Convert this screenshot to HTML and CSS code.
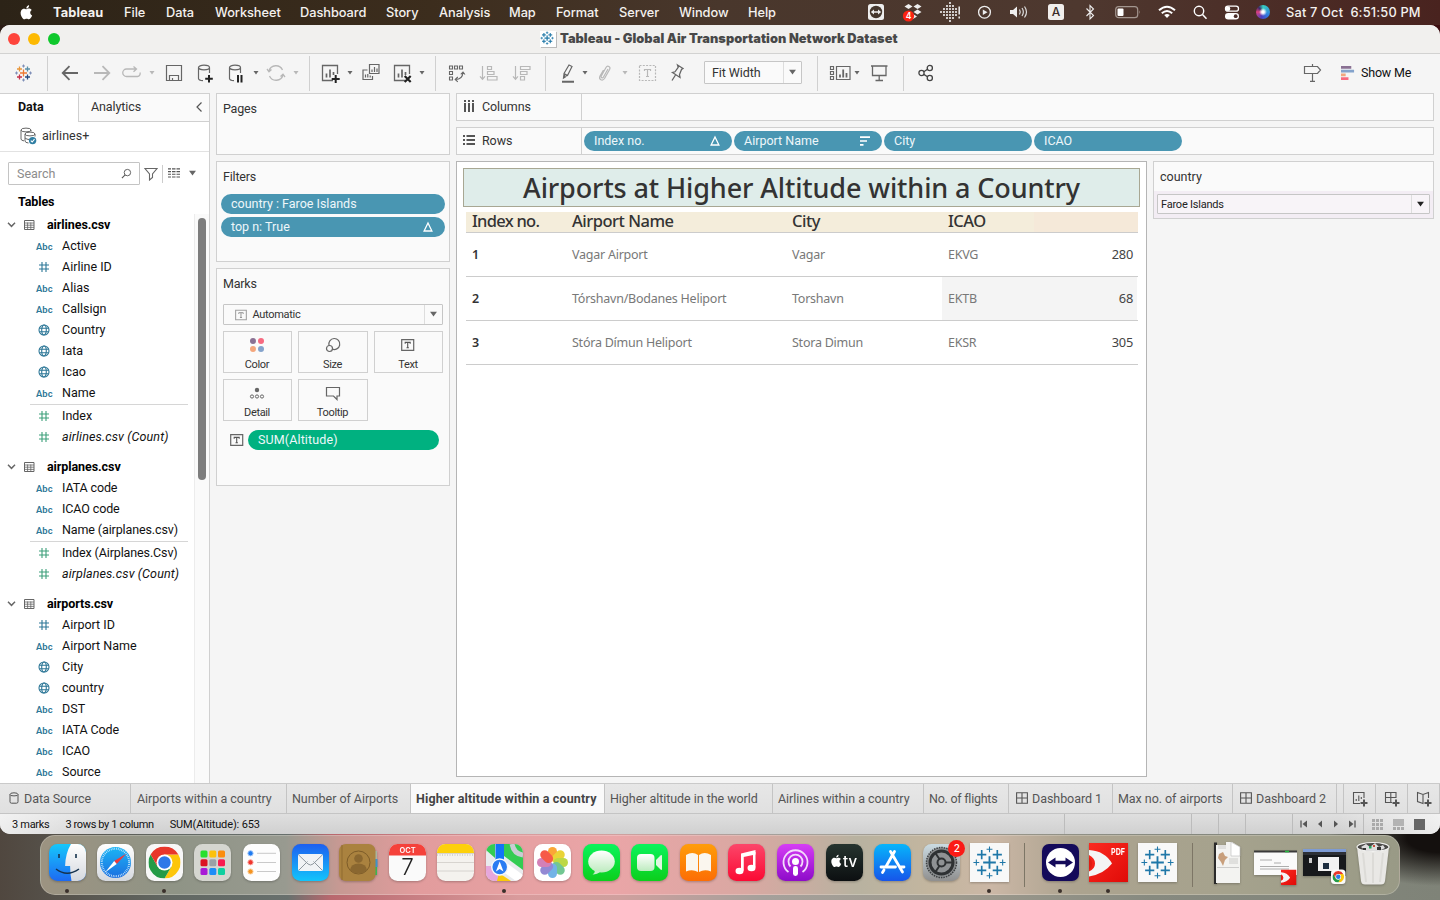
FILE: index.html
```html
<!DOCTYPE html>
<html lang="en">
<head>
<meta charset="utf-8">
<title>Tableau - Global Air Transportation Network Dataset</title>
<link rel="stylesheet" href="styles.css">
</head>
<body>
<svg class="defs" width="0" height="0" aria-hidden="true">
  <symbol id="caret" viewBox="0 0 8 8"><path d="M1.5 2h5L4 5.4z" fill="currentColor"/></symbol>
  <symbol id="hash" viewBox="0 0 12 12"><path d="M4 1v10M8 1v10M1 4h10M1 8h10" stroke="currentColor" stroke-width="1.1" fill="none"/></symbol>
  <symbol id="globe" viewBox="0 0 12 12"><g stroke="currentColor" stroke-width="1.1" fill="none"><circle cx="6" cy="6" r="5"/><ellipse cx="6" cy="6" rx="2.3" ry="5"/><path d="M1.4 4.2h9.2M1.4 7.8h9.2"/></g></symbol>
  <symbol id="table" viewBox="0 0 12 12"><g stroke="#666" fill="none"><path d="M1.5 1.5h9.500v9h-9.500z"/><path d="M1 4h10M1 6.200h10M1 8.400h10M4.600 3.500v7M7.800 3.500v7" stroke-width=".8"/></g></symbol>
  <symbol id="chev" viewBox="0 0 10 10"><path d="M1.8 3.500L5 6.700l3.200-3.200" stroke="#666" stroke-width="1.300" fill="none"/></symbol>
  <symbol id="delta" viewBox="0 0 12 12"><path d="M6 2l3.900 8H2.100z" stroke="#fff" stroke-width="1.300" fill="none"/></symbol>
  <symbol id="tbox" viewBox="0 0 14 12"><path d="M.7.7h12v10.600h-12z" stroke="#666" stroke-width="1.200" fill="none"/><path d="M4.200 4.800V3.400h5v1.400M6.700 3.400v5.400M5.500 8.800h2.400" stroke="#555" stroke-width="1.100" fill="none"/></symbol>
  <symbol id="dash" viewBox="0 0 12 12"><path d="M.6 .8h10.800v10.400H.6zM6 .8v10.400M.6 6h10.800" stroke="#555" stroke-width="1.100" fill="none"/></symbol>
  <symbol id="sheet" viewBox="0 0 20 20"><path d="M17.500 11V2.500h-15v15H13" stroke="currentColor" stroke-width="1.300" fill="none"/><path d="M6.500 14.500v-4M10 14.500v-8M13.500 12v-3" stroke="currentColor" stroke-width="1.700"/></symbol>
  <symbol id="db" viewBox="0 0 20 20"><g stroke="currentColor" stroke-width="1.200" fill="none"><ellipse cx="9" cy="4.500" rx="5.500" ry="2.300"/><path d="M3.500 4.500v11c0 1.200 2 2 4.500 2.200M14.500 4.500V10"/></g></symbol>
  <symbol id="marks" viewBox="0 0 40 40"><g stroke="#1f77a8" fill="none"><path d="M20 13.500v13M13.500 20h13" stroke-width="1.900"/><path d="M12 7.300v9.400M7.300 12h9.400M28 7.300v9.400M23.300 12h9.400M12 23.300v9.400M7.300 28h9.400M28 23.300v9.400M23.300 28h9.400" stroke-width="1.700"/><path d="M20 3.500v6M17 6.500h6M20 30.500v6M17 33.500h6M3.500 20h6M6.500 17v6M30.500 20h6M33.500 17v6" stroke-width="1.100"/></g></symbol>
  <symbol id="chrome" viewBox="0 0 32 32"><path d="M16 8h13.860A16 16 0 0 1 16 32l6.930-12z" fill="#fdc60a"/><path d="M2.140 8A16 16 0 0 0 16 32l6.930-12H9.070z" fill="#249b46"/><path d="M2.140 8A16 16 0 0 1 29.860 8H16l-6.930 12z" fill="#e8372b"/><circle cx="16" cy="16" r="8" fill="#fff"/><circle cx="16" cy="16" r="6.200" fill="#2d79e8"/></symbol>
  <symbol id="redpdf" viewBox="0 0 39 39"><path d="M0 0h39v39H0z" fill="url(#gPdf)"/><path d="M0 7q16 1 23 13.500Q15 31 0 33.500v-5q6-2.500 6-8T0 12z" fill="#f4f4f4"/><path d="M0 14.500q3 2 3 6t-3 6z" fill="#e01b12"/></symbol>
  <linearGradient id="gFinder" x2="0" y2="1"><stop offset="0" stop-color="#16c7fb"/><stop offset="1" stop-color="#1d6af2"/></linearGradient>
  <linearGradient id="gLight" x2="0" y2="1"><stop offset="0" stop-color="#fff"/><stop offset="1" stop-color="#d5d8de"/></linearGradient>
  <linearGradient id="gSafari" x2="0" y2="1"><stop offset="0" stop-color="#1cb5f5"/><stop offset="1" stop-color="#1c6fe0"/></linearGradient>
  <linearGradient id="gMail" x2="0" y2="1"><stop offset="0" stop-color="#1d5ff0"/><stop offset="1" stop-color="#12c5fb"/></linearGradient>
  <linearGradient id="gGreen" x2="0" y2="1"><stop offset="0" stop-color="#0bf45c"/><stop offset="1" stop-color="#0cce1c"/></linearGradient>
  <linearGradient id="gBubble" x2="0" y2="1"><stop offset="0" stop-color="#fff"/><stop offset="1" stop-color="#bdebbf"/></linearGradient>
  <linearGradient id="gBooks" x2="0" y2="1"><stop offset="0" stop-color="#ff9d0a"/><stop offset="1" stop-color="#fc6d05"/></linearGradient>
  <linearGradient id="gMusic" x2="0" y2="1"><stop offset="0" stop-color="#fc466a"/><stop offset="1" stop-color="#fb0a33"/></linearGradient>
  <linearGradient id="gPod" x2="0" y2="1"><stop offset="0" stop-color="#d63df5"/><stop offset="1" stop-color="#8d0bc9"/></linearGradient>
  <linearGradient id="gTv" x2="0" y2="1"><stop offset="0" stop-color="#26342f"/><stop offset="1" stop-color="#0c0f11"/></linearGradient>
  <linearGradient id="gStore" x2="0" y2="1"><stop offset="0" stop-color="#07b5fb"/><stop offset="1" stop-color="#1655ea"/></linearGradient>
  <linearGradient id="gGear" x2="0" y2="1"><stop offset="0" stop-color="#cbdbe2"/><stop offset="1" stop-color="#8f8f8f"/></linearGradient>
  <linearGradient id="gPdf" x2="1" y2="1"><stop offset="0" stop-color="#fb2a20"/><stop offset="1" stop-color="#e00b08"/></linearGradient>
</svg>

<header class="menubar">
  <svg class="i20 apple" viewBox="0 0 20 20"><path d="M14.200 10.600c0-1.700 1.400-2.500 1.500-2.600-.8-1.200-2.100-1.400-2.600-1.400-1.100-.1-2.100.7-2.700.7-.6 0-1.400-.6-2.300-.6-1.200 0-2.300.7-2.900 1.700-1.300 2.200-.3 5.400.9 7.100.6.9 1.300 1.800 2.200 1.800.9 0 1.200-.6 2.300-.6s1.400.6 2.300.6c1 0 1.600-.9 2.200-1.700.7-1 1-1.900 1-2-.1 0-1.900-.7-1.900-3zM12.400 5.400c.5-.6.8-1.400.7-2.200-.7 0-1.500.5-2 1-.5.6-.9 1.400-.8 2.200.8.100 1.600-.4 2.100-1z" fill="#fff"/></svg>
  <b>Tableau</b><span>File</span><span>Data</span><span>Worksheet</span><span>Dashboard</span><span>Story</span><span>Analysis</span><span>Map</span><span>Format</span><span>Server</span><span>Window</span><span>Help</span>
  <svg class="i20" viewBox="0 0 20 20"><rect x="2" y="2" width="16" height="16" rx="2.500" fill="#eee"/><circle cx="10" cy="10" r="6.200" fill="#45372d"/><path d="M4.800 10l3.200-2.400v1.600h4V7.600l3.200 2.400-3.200 2.400v-1.600H8v1.600z" fill="#eee"/></svg>
  <svg class="i20" viewBox="0 0 20 20"><path d="M5.500 2l4 2.500-4 2.500-4-2.500zM14.500 2l4 2.500-4 2.500-4-2.500zM14.500 7.500l4 2.500-4 2.500-4-2.500zM10 12l4 2.500-4 2.500z" fill="#eee"/><circle cx="5.500" cy="14" r="5.600" fill="#fb2312"/><text x="5.500" y="17" font-size="8.500" font-weight="600" text-anchor="middle" fill="#fff">4</text></svg>
  <svg class="i20" viewBox="0 0 20 20"><g stroke="#eee" stroke-width="2.200" stroke-linecap="round" stroke-dasharray="0 3"><path d="M10 1v19M7 4v13M13 4v13M4 7v7M16 7v7M1 10h.1"/></g><path d="M19.200 4.500v8M19.200 14.500v2" stroke="#eee" stroke-width="1.500"/></svg>
  <svg class="i20" viewBox="0 0 20 20"><circle cx="9.500" cy="10.200" r="5.900" stroke="#eee" stroke-width="1.300" fill="none"/><path d="M7.800 7.400v5.600l4.700-2.800z" fill="#eee"/></svg>
  <svg class="i20" viewBox="0 0 20 20"><path d="M1 8h3l4-3.500v11L4 12H1z" fill="#eee"/><path d="M10.500 7.500q1.500 2.500 0 5M13 6q2.700 4 0 8M15.500 4.500q4 5.500 0 11" stroke="#ddd" stroke-width="1.200" fill="none"/></svg>
  <svg class="i20" viewBox="0 0 20 20"><rect x="2" y="2" width="16" height="16" rx="2.500" fill="#f1eeec"/><text x="10" y="14.200" font-size="12" text-anchor="middle" fill="#3b2c27">A</text></svg>
  <svg class="i20" viewBox="0 0 20 20"><path d="M6.500 6.500l7 7L10 17V3.500L13.500 7l-7 7" stroke="#eee" stroke-width="1.100" fill="none"/></svg>
  <svg class="i26" viewBox="0 0 26 20"><rect x=".7" y="4.700" width="22" height="11" rx="3" stroke="#a3968f" stroke-width="1.200" fill="none"/><rect x="2.500" y="6.500" width="6" height="7.400" rx="1" fill="#fff"/><path d="M24.300 8.300q1.400 1.800 0 3.600z" fill="#a3968f"/></svg>
  <svg class="i20" viewBox="0 0 20 20"><g stroke="#fff" fill="none" stroke-width="2"><path d="M2 8.200q8-7 16 0M4.800 11.200q5.200-4.500 10.400 0"/></g><path d="M10 16l-2.800-3q2.800-2.200 5.600 0z" fill="#fff"/></svg>
  <svg class="i20" viewBox="0 0 20 20"><circle cx="9" cy="9" r="4.700" stroke="#fff" stroke-width="1.400" fill="none"/><path d="M12.500 12.500l4 4.200" stroke="#fff" stroke-width="1.600"/></svg>
  <svg class="i20" viewBox="0 0 20 20"><rect x="3.500" y="4.200" width="13" height="5" rx="2.500" stroke="#fff" stroke-width="1.300" fill="none"/><circle cx="6" cy="6.700" r="2.300" fill="#fff"/><rect x="3" y="11" width="14" height="6.500" rx="3.200" fill="#fff"/><circle cx="13.700" cy="14.200" r="1.900" fill="#4a2c28"/></svg>
  <i class="siri"></i>
  <span class="clock">Sat 7 Oct&nbsp; 6:51:50 PM</span>
</header>

<main class="window">
  <div class="titlebar">
    <div class="lights"><i class="red"></i><i class="amber"></i><i class="green"></i></div>
    <svg class="tlogo" viewBox="2 2 36 36"><use href="#marks"/><use href="#marks"/></svg>
    <b>Tableau - Global Air Transportation Network Dataset</b>
  </div>

  <div class="toolbar">
    <svg class="i20" viewBox="0 0 20 20"><g fill="none" stroke-width="1.300"><path d="M9.500 6.500v7M6 10h7" stroke="#ee7a33"/><path d="M5.500 3.500v5M3 6h5" stroke="#e8963a"/><path d="M13.500 3.500v5M11 6h5" stroke="#5b90a8"/><path d="M5.500 11.500v5M3 14h5" stroke="#c4314b"/><path d="M13.500 11.500v5M11 14h5" stroke="#274b80"/><path d="M9.500 1.500v3M8 3h3M9.500 15.500v3M8 17h3M1 10h3M2.500 8.500v3M15 10h3M16.500 8.500v3" stroke="#7f8fb8" stroke-width="1"/></g></svg>
    <i class="sep"></i>
    <svg class="i20 dk" viewBox="0 0 20 20"><path d="M18 10H3M9.500 3.200L2.700 10l6.800 6.800" stroke="currentColor" stroke-width="1.800" fill="none"/></svg>
    <svg class="i20 lt" viewBox="0 0 20 20"><path d="M2 10h15M10.500 3.200l6.800 6.800-6.800 6.800" stroke="currentColor" stroke-width="1.800" fill="none"/></svg>
    <svg class="i20 lt" viewBox="0 0 20 20"><path d="M14 6H4.500a3.200 3.200 0 0 0 0 7.500h11a3 3 0 0 0 2.500-4M11.500 3.500L14.500 6l-3 2.800" stroke="currentColor" stroke-width="1.300" fill="none"/></svg>
    <svg class="c8 lt"><use href="#caret"/></svg>
    <svg class="i20 dk" viewBox="0 0 20 20"><path d="M2.500 2.500h15v15h-15zM5.500 17.500v-5h9v5M8.500 17.500V15" stroke="currentColor" stroke-width="1.200" fill="none"/></svg>
    <svg class="i20 dk" viewBox="0 -1 20 20"><use href="#db" width="20" height="20" y="-1"/><path d="M14 11v7.600M10.200 14.800h7.600" stroke="#222" stroke-width="2"/></svg>
    <svg class="i20 dk" viewBox="0 -1 20 20"><use href="#db" width="20" height="20" y="-1"/><path d="M12 11v7.500M15.500 11v7.500" stroke="#222" stroke-width="2"/></svg>
    <svg class="c8 dk"><use href="#caret"/></svg>
    <svg class="i20 lt" viewBox="0 0 20 20"><path d="M3 8a7.200 7.200 0 0 1 13.500-1M17 12A7.200 7.200 0 0 1 3.500 13M1 6l2 2.800L5.500 6.500M19 14l-2-2.800-2.500 2.300" stroke="currentColor" stroke-width="1.300" fill="none"/></svg>
    <svg class="c8 lt"><use href="#caret"/></svg>
    <i class="sep"></i>
    <svg class="i20 dk" viewBox="1 0 20 20"><use href="#sheet" width="20" height="20"/><path d="M15.700 12v8M11.700 16h8" stroke="#222" stroke-width="2"/></svg>
    <svg class="c8 dk"><use href="#caret"/></svg>
    <svg class="i20 dk" viewBox="0 0 20 20"><path d="M8.500 1.500h9.500v9H8.500zM6.500 7H2v9.500h9.500V13M11 9V6.500M13.500 9V4M16 9V5.500M4.500 14.500v-3M6.800 14.500V11M9.200 14.500v-2" stroke="currentColor" stroke-width="1.200" fill="none"/></svg>
    <svg class="i20 dk" viewBox="1 0 20 20"><use href="#sheet" width="20" height="20"/><path d="M12.700 13l6 6M18.700 13l-6 6" stroke="#222" stroke-width="2.200"/></svg>
    <svg class="c8 dk"><use href="#caret"/></svg>
    <i class="sep"></i>
    <svg class="i20 dk" viewBox="0 0 20 20"><g stroke="currentColor" stroke-width="1.100" fill="none"><path d="M2.500 3h3v3h-3zM7.500 3h3v3h-3zM12.500 3h3v3h-3zM2.500 8.500h3v3h-3zM2.500 14h3v3h-3z"/><path d="M8.500 16.500q7 0 7.500-7M10.800 14l-2.600 2.500 2.600 2.300M13.800 11.300L16 9l2 2.500"/></g></svg>
    <svg class="i20 lt" viewBox="1 0 20 20"><path d="M3.500 3v13M1 13.300l2.500 3 2.500-3M8.500 3.500h4v3h-4zM8.500 8.500h6.500v3H8.500zM8.500 13.500h9.500v3.500H8.500z" stroke="currentColor" stroke-width="1.200" fill="none"/></svg>
    <svg class="i20 lt" viewBox="0 0 20 20"><path d="M3.500 3v13M1 13.300l2.500 3 2.500-3M8.500 3.500h9.500v3H8.500zM8.500 8.500h6.500v3H8.500zM8.500 13.500h4v3.500h-4z" stroke="currentColor" stroke-width="1.200" fill="none"/></svg>
    <i class="sep"></i>
    <svg class="i20 dk" viewBox="0 0 20 20"><path d="M6 10.500l5-8.500 3 1.500-4.500 9-3 1zM6 10.500l3.500 2M6 11l-.5 4 2.500-1.500" stroke="currentColor" stroke-width="1.200" fill="none"/><path d="M4 18.700h12" stroke="currentColor" stroke-width="2"/></svg>
    <svg class="c8 dk"><use href="#caret"/></svg>
    <svg class="i20 lt" viewBox="0 0 20 20"><path d="M13 6l-4.500 8c-1 1.700-3 .5-2.200-1L11 4.500c1.500-2.500 5-.8 3.600 2L9.500 15.500C7.500 18.500 3.300 16.500 5 13l3.500-6" stroke="currentColor" stroke-width="1.200" fill="none"/></svg>
    <svg class="c8 lt"><use href="#caret"/></svg>
    <svg class="i20 lt" viewBox="0 0 20 20"><path d="M2.500 2.500h16v15h-16z" stroke="currentColor" stroke-width="1.200" stroke-dasharray="2 1.300" fill="none"/><path d="M7.500 8V6.500h6V8M10.500 6.500v7M9 13.500h3" stroke="currentColor" stroke-width="1.200" fill="none"/></svg>
    <svg class="i20 dk" viewBox="0 0 20 20"><path d="M10.500 2l5.500 3.500-1.500 1-2 5 .5 3L5.500 9.500l2.500-.7 3.200-4.500zM8.500 12L5 17.500" stroke="currentColor" stroke-width="1.300" fill="none"/></svg>
    <div class="select fit"><span>Fit Width</span><em><svg class="c10 dk"><use href="#caret"/></svg></em></div>
    <i class="sep"></i>
    <svg class="i22 dk" viewBox="0 0 22 20"><path d="M1.500 3.500h3v3h-3zM1.500 8.500h3v3h-3zM1.500 13.500h3v3h-3zM7.500 3.500H21v13H7.500z" stroke="currentColor" stroke-width="1.200" fill="none"/><path d="M11 14.500v-3M14.200 14.500v-8M17.500 14.500V10" stroke="currentColor" stroke-width="1.800"/></svg>
    <svg class="c8 dk"><use href="#caret"/></svg>
    <svg class="i20 dk" viewBox="0 0 20 20"><path d="M2 3h16.500M3.500 3.500v9h13.500v-9M10.200 12.500v5M6.500 17.500h7.500" stroke="currentColor" stroke-width="1.300" fill="none"/></svg>
    <i class="sep"></i>
    <svg class="i20 dk" viewBox="0 0 20 20"><g stroke="#444" stroke-width="1.300" fill="none"><circle cx="5.500" cy="10" r="2.600"/><circle cx="13.800" cy="5" r="2.600"/><circle cx="13.800" cy="15" r="2.600"/><path d="M7.800 8.700L11.500 6.300M7.800 11.400l3.700 2.300"/></g></svg>
    <svg class="i20 dk" viewBox="0 0 20 20"><path d="M2.500 3.500h13l3 3.500-3 3.500h-13zM10.500 1v2.500M10.500 10.500v8M8 18.300h5" stroke="currentColor" stroke-width="1.200" fill="none"/></svg>
    <div class="showme"><svg viewBox="0 0 15 16"><path d="M0 .5h11v3H0z" fill="#8a7193"/><path d="M0 4.500h14v3H0z" fill="#84a3cc"/><path d="M0 8.500h5v3H0z" fill="#f0a77f"/><path d="M0 12.500h8v3H0z" fill="#f76a80"/></svg><span>Show Me</span></div>
  </div>

  <div class="work">
    <aside class="data">
      <div class="dtabs"><b>Data</b><div><span>Analytics</span><svg viewBox="0 0 8 12"><path d="M6.500 1.500L2 6l4.500 4.500" stroke="#555" stroke-width="1.200" fill="none"/></svg></div></div>
      <div class="source"><svg viewBox="0 0 18 18"><g stroke="#666" stroke-width="1" fill="none"><ellipse cx="6" cy="3" rx="5" ry="1.900"/><path d="M1 3v9q0 1.500 3 1.900M11 3v1.500M5 7v7q0 1.700 3.500 2"/><ellipse cx="10" cy="7" rx="5" ry="1.900"/><path d="M15 7v2.500M5 11q2 1.500 4 1.500"/></g><circle cx="12.600" cy="13.600" r="3.700" fill="#2f7ea3"/><path d="M10.800 13.600l1.400 1.400 2.300-2.800" stroke="#fff" stroke-width="1.100" fill="none"/></svg><span>airlines+</span></div>
      <div class="find">
        <div class="search"><span>Search</span><svg viewBox="0 0 12 12"><circle cx="7" cy="5" r="3.500" stroke="#555" fill="none"/><path d="M4.500 7.500L1 11" stroke="#555" stroke-width="1.200"/></svg></div>
        <svg class="funnel" viewBox="0 0 14 14"><path d="M1 1.500h12L8.500 7v3.500l-3 2.500V7z" stroke="#666" stroke-width="1.100" fill="none"/></svg>
        <i></i>
        <svg class="listicon" viewBox="0 0 12 10"><g stroke="#555" stroke-width="1.100"><path d="M0 .9h3M4 .9h3.500M8.500 .9H12M0 3.600h3M4 3.600h3.500M8.500 3.600H12M0 6.300h3M4 6.300h3.500M8.500 6.300H12M0 9h3M4 9h3.500M8.500 9H12"/></g></svg>
        <svg class="c10 dk"><use href="#caret"/></svg>
      </div>
      <b class="tables">Tables</b>
      <div class="tree">
        <div class="fields">
          <p class="head"><svg><use href="#chev"/></svg><svg><use href="#table"/></svg><b>airlines.csv</b></p>
          <p><i>Abc</i><span>Active</span></p>
          <p><svg><use href="#hash"/></svg><span>Airline ID</span></p>
          <p><i>Abc</i><span>Alias</span></p>
          <p><i>Abc</i><span>Callsign</span></p>
          <p><svg><use href="#globe"/></svg><span>Country</span></p>
          <p><svg><use href="#globe"/></svg><span>Iata</span></p>
          <p><svg><use href="#globe"/></svg><span>Icao</span></p>
          <p><i>Abc</i><span>Name</span></p>
          <hr>
          <p class="m"><svg><use href="#hash"/></svg><span>Index</span></p>
          <p class="m last"><svg><use href="#hash"/></svg><em>airlines.csv (Count)</em></p>
          <p class="head"><svg><use href="#chev"/></svg><svg><use href="#table"/></svg><b>airplanes.csv</b></p>
          <p><i>Abc</i><span class="tight">IATA code</span></p>
          <p><i>Abc</i><span class="tight">ICAO code</span></p>
          <p><i>Abc</i><span class="tight">Name (airplanes.csv)</span></p>
          <hr>
          <p class="m"><svg><use href="#hash"/></svg><span class="tight">Index (Airplanes.Csv)</span></p>
          <p class="m last"><svg><use href="#hash"/></svg><em>airplanes.csv (Count)</em></p>
          <p class="head"><svg><use href="#chev"/></svg><svg><use href="#table"/></svg><b>airports.csv</b></p>
          <p><svg><use href="#hash"/></svg><span>Airport ID</span></p>
          <p><i>Abc</i><span>Airport Name</span></p>
          <p><svg><use href="#globe"/></svg><span>City</span></p>
          <p><svg><use href="#globe"/></svg><span>country</span></p>
          <p><i>Abc</i><span>DST</span></p>
          <p><i>Abc</i><span class="tight">IATA Code</span></p>
          <p><i>Abc</i><span>ICAO</span></p>
          <p><i>Abc</i><span>Source</span></p>
        </div>
        <div class="track"><i></i></div>
      </div>
    </aside>

    <section class="cards">
      <div class="card pages"><h4>Pages</h4></div>
      <div class="card filters"><h4>Filters</h4>
        <div class="pill">country : Faroe Islands</div>
        <div class="pill">top n: True<svg><use href="#delta"/></svg></div>
      </div>
      <div class="card marks"><h4>Marks</h4>
        <div class="select auto"><svg class="t"><use href="#tbox"/></svg><span>Automatic</span><em><svg class="c10 dk"><use href="#caret"/></svg></em></div>
        <div class="buttons">
          <div><svg viewBox="0 0 16 16"><circle cx="4" cy="4" r="3" fill="#8a7193"/><circle cx="12" cy="4" r="3" fill="#f76a80"/><circle cx="4" cy="12" r="3" fill="#f4a67c"/><circle cx="12" cy="12" r="3" fill="#84a3cc"/></svg>Color</div>
          <div><svg viewBox="0 0 16 16"><g stroke="#666" stroke-width="1.200" fill="none"><path d="M4 8.500A5.500 5.500 0 1 1 7 12"/><circle cx="4.500" cy="11.500" r="3"/></g></svg>Size</div>
          <div><svg viewBox="-1 -2 16 16"><use href="#tbox" width="14" height="12"/></svg>Text</div>
          <div><svg viewBox="0 0 16 16"><circle cx="8" cy="5" r="2.200" fill="#666"/><g stroke="#666" fill="none"><circle cx="3" cy="11.500" r="1.600"/><circle cx="8" cy="11.500" r="1.600"/><circle cx="13" cy="11.500" r="1.600"/></g></svg>Detail</div>
          <div><svg viewBox="0 0 16 16"><path d="M1.500 2.500h13v8.500H12v3.500L8.500 11h-7z" stroke="#666" stroke-width="1.200" fill="none"/></svg>Tooltip</div>
        </div>
        <div class="sum"><svg class="t"><use href="#tbox"/></svg><div class="pill green">SUM(Altitude)</div></div>
      </div>
    </section>

    <section class="view">
      <div class="shelf"><div class="lab"><svg viewBox="0 0 12 12"><path d="M2 0v2M6 0v2M10 0v2M2 3v9M6 3v9M10 3v9" stroke="#555" stroke-width="2"/></svg>Columns</div></div>
      <div class="shelf"><div class="lab"><svg viewBox="0 0 12 12"><path d="M0 2h2M0 6h2M0 10h2M3.500 2H12M3.500 6H12M3.500 10H12" stroke="#555" stroke-width="1.800"/></svg>Rows</div>
        <div class="pill">Index no.<svg><use href="#delta"/></svg></div>
        <div class="pill">Airport Name<svg viewBox="0 0 12 12"><path d="M1 2.200h10M1 6h7M1 9.800h3.500" stroke="#fff" stroke-width="1.700"/></svg></div>
        <div class="pill">City</div>
        <div class="pill">ICAO</div>
      </div>
      <div class="stage">
        <div class="canvas">
          <h1>Airports at Higher Altitude within a Country</h1>
          <div class="grid th"><b>Index no.</b><b>Airport Name</b><b>City</b><b>ICAO</b><b class="peach"></b></div>
          <div class="grid"><b>1</b><span>Vagar Airport</span><span>Vagar</span><span>EKVG</span><em>280</em></div>
          <div class="grid"><b>2</b><span>Tórshavn/Bodanes Heliport</span><span>Torshavn</span><span class="hl">EKTB</span><em class="hl">68</em></div>
          <div class="grid"><b>3</b><span>Stóra Dímun Heliport</span><span>Stora Dimun</span><span>EKSR</span><em>305</em></div>
        </div>
        <div class="filter"><span class="ftitle">country</span><div class="fbody"><div class="select"><span>Faroe Islands</span><em><svg class="c10"><use href="#caret"/></svg></em></div></div></div>
      </div>
    </section>
  </div>

  <nav class="sheets">
    <div class="ds"><svg viewBox="0 0 10 12"><path d="M1 2.500v7.200q0 1.500 1.500 1.500h5q1.500 0 1.500-1.500V2.500Q9 .8 5 .8T1 2.500q0 1.400 4 1.400t4-1.400" stroke="#555" fill="none"/></svg>Data Source</div>
    <div>Airports within a country</div><div>Number of Airports</div><div class="on">Higher altitude within a country</div><div>Higher altitude in the world</div><div>Airlines within a country</div><div>No. of flights</div>
    <div class="d"><svg><use href="#dash"/></svg>Dashboard 1</div><div>Max no. of airports</div><div class="d"><svg><use href="#dash"/></svg>Dashboard 2</div><div></div>
    <div class="n"><svg viewBox="0 0 16 16"><path d="M12 7V1.500H1.500v11H8M4.200 10V8M6.800 10V4.500M9.300 8V6" stroke="#555" stroke-width="1.100" fill="none"/><path d="M12 8.500v7M8.500 12h7" stroke="#555" stroke-width="2"/></svg></div>
    <div class="n"><svg viewBox="0 0 16 16"><path d="M12 7V1.500H1.500v10H8M6.800 1.500v10M1.500 6.500H12" stroke="#555" stroke-width="1.100" fill="none"/><path d="M12 8.500v7M8.500 12h7" stroke="#555" stroke-width="2"/></svg></div>
    <div class="n"><svg viewBox="0 0 16 16"><path d="M12.500 7V1.500L7 3.500 1.500 1.500v9L7 12.500V3.500" stroke="#555" stroke-width="1.100" fill="none"/><path d="M12 8.500v7M8.500 12h7" stroke="#555" stroke-width="2"/></svg></div>
  </nav>
  <footer class="status">
    <div class="stats"><span>3 marks</span><span>3 rows by 1 column</span><span>SUM(Altitude): 653</span></div><div></div><div></div><div></div><div></div>
    <div class="steps"><svg viewBox="0 0 8 8"><path d="M1 .5v7" stroke="#555" stroke-width="1.300"/><path d="M7 .5v7L2.500 4z" fill="#555"/></svg><svg viewBox="0 0 8 8"><path d="M6 .5v7L2 4z" fill="#555"/></svg><svg viewBox="0 0 8 8"><path d="M2 .5v7L6 4z" fill="#555"/></svg><svg viewBox="0 0 8 8"><path d="M7 .5v7" stroke="#555" stroke-width="1.300"/><path d="M1 .5v7L5.500 4z" fill="#555"/></svg></div>
    <div class="modes"><svg viewBox="0 0 11 11"><path d="M0 1.500h11M0 5.500h11M0 9.500h11" stroke="#aaa" stroke-width="3" stroke-dasharray="3 1"/></svg><svg viewBox="0 0 11 11"><path d="M0 0h11v7H0z" fill="#b3b3b3"/><path d="M0 9.500h11" stroke="#aaa" stroke-width="3" stroke-dasharray="3 1"/></svg><svg viewBox="0 0 11 11"><path d="M0 0h11v11H0z" fill="#666"/></svg></div>
  </footer>
</main>

<footer class="desk"><div class="dock">
  <div class="app run"><svg viewBox="0 0 37 37"><rect width="37" height="37" rx="8.500" fill="url(#gFinder)"/><path d="M22 0h6.500A8.500 8.500 0 0 1 37 8.500v20a8.500 8.500 0 0 1-8.500 8.500H22.500q-1.300-6-1.400-15h-5Q16.500 9 22 0z" fill="url(#gLight)"/><path d="M10 10v4M27 10v4" stroke="#16324d" stroke-width="1.600"/><path d="M7 25q11 8.500 23 0" stroke="#16324d" stroke-width="1.500" fill="none"/></svg></div>
  <div class="app"><svg viewBox="0 0 37 37"><rect width="37" height="37" rx="8.500" fill="url(#gLight)"/><circle cx="18.500" cy="18.500" r="15.500" fill="url(#gSafari)"/><circle cx="18.500" cy="18.500" r="13.700" stroke="#d9f0ff" stroke-width="2" stroke-dasharray=".7 1.100" fill="none"/><path d="M29.500 9.500L19.700 20l-2.500-2.900z" fill="#f03a3a"/><path d="M8 28.500l9.200-11.400 2.500 2.900z" fill="#fff"/></svg></div>
  <div class="app run"><svg viewBox="0 0 37 37"><rect width="37" height="37" rx="8.500" fill="#f7f7f7"/><use href="#chrome" x="2.500" y="2.500" width="32" height="32"/></svg></div>
  <div class="app"><svg viewBox="0 0 37 37"><rect width="37" height="37" rx="8.500" fill="#d5d6d0"/><rect x="6.500" y="6.500" width="7" height="7" rx="1.500" fill="#27e02f"/><rect x="15.300" y="6.500" width="7" height="7" rx="1.500" fill="#fcc10a"/><rect x="24" y="6.500" width="7" height="7" rx="1.500" fill="#fb8c0c"/><rect x="6.500" y="15.300" width="7" height="7" rx="1.500" fill="#dc1322"/><rect x="15.300" y="15.300" width="7" height="7" rx="1.500" fill="#9aa1a6"/><rect x="24" y="15.300" width="7" height="7" rx="1.500" fill="#f81c50"/><rect x="6.500" y="24" width="7" height="7" rx="1.500" fill="#a81bd6"/><rect x="15.300" y="24" width="7" height="7" rx="1.500" fill="#1e8df7"/><rect x="24" y="24" width="7" height="7" rx="1.500" fill="#0fd0a0"/></svg></div>
  <div class="app"><svg viewBox="0 0 37 37"><rect width="37" height="37" rx="8.500" fill="#fdfdfd"/><path d="M14 9.300h19M14 18.500h19M14 27.500h19" stroke="#c9c9c9"/><g stroke-width="1"><circle cx="7.500" cy="9.300" r="2.600" fill="#1f7bf0" stroke="#9cc4fa"/><circle cx="7.500" cy="18.300" r="2.600" fill="#f0352c" stroke="#f9a9a5"/><circle cx="7.500" cy="27.500" r="2.600" fill="#f49320" stroke="#fbd0a0"/></g></svg></div>
  <div class="app"><svg viewBox="0 0 37 37"><rect width="37" height="37" rx="8.500" fill="url(#gMail)"/><rect x="6" y="10" width="25" height="17" rx="2" fill="#f1f3f5"/><path d="M7 26l8.500-8.500M30 26l-8.500-8.500M6.700 11L16 20q2.500 2 5 0l9.300-9" stroke="#8e979e" stroke-width="1" fill="none"/></svg></div>
  <div class="app"><svg viewBox="0 0 37 37"><path d="M33 7h4v8h-4z" fill="#a9b4a0"/><path d="M33 15h4.500v8H33z" fill="#3f92c9"/><path d="M33 23h4v8h-4z" fill="#3ab553"/><rect x="-1" width="36.500" height="37" rx="7" fill="#aa823f"/><path d="M2 1v35" stroke="#8f6b30"/><g stroke="#7d5c29" fill="none"><circle cx="18.500" cy="18.500" r="11.500"/></g><circle cx="18.500" cy="14.500" r="4.300" fill="#8a6730"/><path d="M10 26q1-6.500 8.500-6.500T27 26q-3.500 3.500-8.500 3.500T10 26z" fill="#8a6730"/></svg></div>
  <div class="app"><svg viewBox="0 0 37 37"><rect width="37" height="37" rx="8.500" fill="#fafafa"/><path d="M0 11.500v-3A8.500 8.500 0 0 1 8.500 0h20A8.500 8.500 0 0 1 37 8.500v3z" fill="#f5413a"/><text x="18.500" y="9" font-size="7.500" font-weight="600" text-anchor="middle" fill="#fff">OCT</text><text x="18.500" y="31" font-size="22.500" font-weight="300" text-anchor="middle" fill="#222">7</text></svg></div>
  <div class="app"><svg viewBox="0 0 37 37"><rect width="37" height="37" rx="8.500" fill="#f4f2ee"/><path d="M0 9v-.5A8.500 8.500 0 0 1 8.500 0h20A8.500 8.500 0 0 1 37 8.500V9z" fill="#fdd00b"/><path d="M0 9.500h37M0 18.500h37M0 27h37" stroke="#cfccc6" stroke-width=".8"/><path d="M0 11h37" stroke="#aaa" stroke-width=".8" stroke-dasharray="1 1.500"/></svg></div>
  <div class="app run"><svg viewBox="0 0 37 37"><clipPath id="rr"><rect width="37" height="37" rx="8.500"/></clipPath><g clip-path="url(#rr)"><path d="M0 0h37v37H0z" fill="#e9ebee"/><path d="M18 0h19v26L18 12z" fill="#33cc52"/><path d="M0 0h9v14L0 6z" fill="#33cc52"/><path d="M0 22h14v15H0z" fill="#e6a7dc"/><path d="M13 29l12 8H11z" fill="#fbcb0a"/><path d="M22 20l15 11v6H30L16 27z" fill="#fff"/><path d="M26 0q2 10 11 11" stroke="#c9ccd3" stroke-width="5" fill="none"/><path d="M9.500 0h8.500v20H9.500z" fill="#1275f5"/><circle cx="13.700" cy="23" r="8" fill="#2a7cf2" stroke="#f5f7fa" stroke-width="1.500"/><path d="M13.700 17.500l3.800 10-3.800-2.500-3.800 2.500z" fill="#fff"/></g></svg></div>
  <div class="app"><svg viewBox="0 0 37 37"><rect width="37" height="37" rx="8.500" fill="#fff"/><g opacity=".88"><rect x="14" y="3" width="9" height="14.500" rx="4.500" fill="#fa9a1c"/><rect x="14" y="3" width="9" height="14.500" rx="4.500" fill="#e8cf1c" transform="rotate(45 18.500 18.500)"/><rect x="14" y="3" width="9" height="14.500" rx="4.500" fill="#b5d32c" transform="rotate(90 18.500 18.500)"/><rect x="14" y="3" width="9" height="14.500" rx="4.500" fill="#5fc083" transform="rotate(135 18.500 18.500)"/><rect x="14" y="3" width="9" height="14.500" rx="4.500" fill="#5fa9e3" transform="rotate(180 18.500 18.500)"/><rect x="14" y="3" width="9" height="14.500" rx="4.500" fill="#8579cf" transform="rotate(225 18.500 18.500)"/><rect x="14" y="3" width="9" height="14.500" rx="4.500" fill="#cd6fae" transform="rotate(270 18.500 18.500)"/><rect x="14" y="3" width="9" height="14.500" rx="4.500" fill="#f5442f" transform="rotate(315 18.500 18.500)"/></g></svg></div>
  <div class="app"><svg viewBox="0 0 37 37"><rect width="37" height="37" rx="8.500" fill="url(#gGreen)"/><ellipse cx="18.500" cy="17.500" rx="13.300" ry="11" fill="url(#gBubble)"/><path d="M12 26q0 3-2.500 4.500 5 0 8-3z" fill="#c8efca"/></svg></div>
  <div class="app"><svg viewBox="0 0 37 37"><rect width="37" height="37" rx="8.500" fill="url(#gGreen)"/><rect x="6" y="10" width="17.500" height="17" rx="4" fill="url(#gBubble)"/><path d="M25 16l4.500-4.500q1.500-1 1.500.500v13q0 1.500-1.500.500L25 21z" fill="#dff7e0"/></svg></div>
  <div class="app"><svg viewBox="0 0 37 37"><rect width="37" height="37" rx="8.500" fill="url(#gBooks)"/><path d="M6 11q6.500-4 12 0v17q-5.500-3-12-.5zM31 11q-6.500-4-12 0v17q5.500-3 12-.5z" fill="#faf6ee"/></svg></div>
  <div class="app"><svg viewBox="0 0 37 37"><rect width="37" height="37" rx="8.500" fill="url(#gMusic)"/><path d="M13 9.500L27.500 6v4.500L15.500 13v13h-2.500z" fill="#fff"/><path d="M25 8h2.500v15.500H25zM13 10h2.500v17H13z" fill="#fff"/><ellipse cx="11.500" cy="27" rx="4" ry="3.300" fill="#fff"/><ellipse cx="23.500" cy="24" rx="4" ry="3.300" fill="#fff"/></svg></div>
  <div class="app"><svg viewBox="0 0 37 37"><rect width="37" height="37" rx="8.500" fill="url(#gPod)"/><g stroke="#f3dcfb" stroke-width="1.800" fill="none"><path d="M11.500 28a12 12 0 1 1 14 0"/><path d="M13.500 22.500a7 7 0 1 1 10 0"/></g><circle cx="18.500" cy="17.500" r="3.500" fill="#fff"/><rect x="16" y="22" width="5" height="10" rx="2.400" fill="#fff"/></svg></div>
  <div class="app"><svg viewBox="0 0 37 37"><rect width="37" height="37" rx="8.500" fill="url(#gTv)"/><path d="M13.500 17.200c0-1.500 1.200-2.200 1.300-2.300-.7-1-1.800-1.200-2.200-1.200-1 0-1.800.6-2.300.6s-1.200-.5-2-.5c-1 0-2 .6-2.500 1.500-1.100 1.900-.3 4.600.8 6.100.5.800 1.100 1.600 1.900 1.600s1-.5 2-.5 1.200.5 2 .5 1.400-.8 1.900-1.500c.6-.8.8-1.600.8-1.700 0 0-1.700-.6-1.700-2.600zM12 12.700c.4-.5.700-1.200.6-1.900-1.300.1-2.500 1.400-2.400 2.700.7 0 1.400-.3 1.800-.8z" fill="#fff"/><text x="17" y="23" font-size="15" font-weight="500" fill="#fff">tv</text></svg></div>
  <div class="app"><svg viewBox="0 0 37 37"><rect width="37" height="37" rx="8.500" fill="url(#gStore)"/><path d="M20.500 7.500L12 22.500M16.500 7.500l12 20.500M7 23h14.500M26 23h4M10 26l-1.500 2.500" stroke="#fff" stroke-width="2.800" stroke-linecap="round"/></svg></div>
  <div class="app"><svg viewBox="0 0 37 37"><rect width="37" height="37" rx="8.500" fill="url(#gGear)"/><circle cx="18.500" cy="18.500" r="15" fill="#8b8e90" stroke="#3d4042" stroke-width="1.500" stroke-dasharray="1.500 1"/><circle cx="18.500" cy="18.500" r="11.500" fill="#8f9294" stroke="#2e3133" stroke-width="3"/><circle cx="18.500" cy="18.500" r="4" fill="none" stroke="#2e3133" stroke-width="2"/><path d="M22 18.500h7M16.700 15.500l-4-6M16.700 21.500l-4 6" stroke="#2e3133" stroke-width="2"/></svg><b class="badge">2</b></div>
  <div class="app run"><svg class="sq" viewBox="0 0 40 40"><use href="#marks"/></svg></div>
  <i class="dsep"></i>
  <div class="app run"><svg viewBox="0 0 37 37"><rect width="37" height="37" rx="7" fill="#140a5a"/><circle cx="18.500" cy="18.500" r="14.500" fill="#fff"/><path d="M6 18.500l7.500-5v3.300h10v-3.300l7.500 5-7.500 5v-3.300h-10v3.300z" fill="#140a5a"/></svg></div>
  <div class="app run"><svg class="sq red" viewBox="0 0 39 39"><use href="#redpdf"/><text x="22" y="12" font-size="9.500" font-weight="700" textLength="14" lengthAdjust="spacingAndGlyphs" fill="#fff">PDF</text></svg></div>
  <div class="app"><svg class="sq" viewBox="0 0 40 40"><use href="#marks"/></svg></div>
  <i class="dsep"></i>
  <div class="app"><svg class="big" viewBox="1 0 40 44"><path d="M7 1.500h3V43H7z" fill="#2a2a2a"/><path d="M9 4h10V1h6l8 5v36H9z" fill="#f3f3f1"/><path d="M24 1v14h9V6z" fill="#fff" stroke="#bbb" stroke-width=".6"/><path d="M12 13l4-2 2 4 3 1-3 3-2 6-2-4-3-4z" fill="#c89f7c"/><path d="M11 5h8M11 7h8M22 18h9M22 20h9M22 22h9M10 26.500h22" stroke="#c2c2c2" stroke-width=".8"/></svg></div>
  <div class="app"><svg class="big" viewBox="0 0 44 44"><path d="M0 10h43v24H0z" fill="#fafafa"/><path d="M0 9.500h43v2H0z" fill="#3a3a3a"/><path d="M31 9.700h4v1.600h-4z" fill="#26b540"/><path d="M6 19h12M6 25.500h29M6 28h29M20 22h7" stroke="#999" stroke-width=".8"/><use href="#redpdf" x="27" y="28.500" width="15.500" height="15.500"/></svg></div>
  <div class="app"><svg class="big" viewBox="0 0 44 44"><path d="M0 8h43v27H0z" fill="#17191c"/><path d="M0 8h43v3H0z" fill="#7d9bd4"/><path d="M0 11h43v3H0z" fill="#2d3036"/><path d="M15 16h21v14H15z" fill="#f2f2f2"/><path d="M20 22h6v6h-6z" fill="#1d2e40"/><path d="M6 17h3v5H6z" fill="#ccc"/><rect x="28" y="28.500" width="14.500" height="14.500" rx="3.500" fill="#fafafa"/><use href="#chrome" x="29.500" y="30" width="11.500" height="11.500"/></svg></div>
  <div class="app"><svg class="big" viewBox="0 0 40 44"><path d="M4 6h32l-4 34q-.5 3.500-4 3.500H12q-3.500 0-4-3.500z" fill="#e9e8e5"/><path d="M10 12l3 29M20 12v30M30 12l-3 29" stroke="#dcdbd7" stroke-width="2" fill="none"/><ellipse cx="20" cy="6" rx="16" ry="4.500" fill="#4b4a48" stroke="#f2f2f0" stroke-width="1.200"/><path d="M8 6l5-3 4 3 5-4 4 4 4-2 2 3-6 3H13z" fill="#dedede"/><path d="M16 5h2.500v2.500H16z" fill="#27a45c"/><path d="M10 7h3v2h-3zM24 6h4v3h-4z" fill="#333"/><path d="M20 4h2v2h-2z" fill="#c54f3c"/></svg></div>
</div></footer>
</body>
</html>
```

FILE: styles.css
```css
* { box-sizing: border-box; }
body { margin: 0; width: 1440px; height: 900px; overflow: hidden; font-family: Roboto, "Liberation Sans", sans-serif; font-size: 12.5px; color: #333; background: linear-gradient(90deg, #2b1c15, #1a1414 60%, #3d0d10); display: flex; flex-direction: column; }
svg { display: block; flex: none; }
i, em { font-style: normal; }
.defs { position: absolute; }
.i20 { width: 20px; height: 20px; overflow: visible; }
.i22 { width: 22px; height: 20px; }
.i26 { width: 26px; height: 20px; }
.c8 { width: 8px; height: 8px; }
.c10 { width: 11px; height: 11px; }
.dk { color: #666; }
.lt { color: #b8b8b8; }

/* macOS menu bar */
.menubar { height: 25px; padding: 0 0 1px 16px; display: grid; grid-template-columns: 37px 71px 42px 49px 85px 86px 53px 70px 47px 63px 60px 69px 118px 37px 37px 35px 34px 37px 34px 35px 42px 33px 32px 31px 33px 1fr; align-items: center; font: 500 12.8px Inter, sans-serif; letter-spacing: -.05px; color: #f4f1ee; white-space: nowrap; background: linear-gradient(90deg, #2c2317, #3c2d1d 30%, #49372c 50%, #4e382f 75%, #49231f); }
.menubar b { font-weight: 700; letter-spacing: .1px; }
.siri { width: 14px; height: 14px; margin-left: 3px; border-radius: 50%; background: radial-gradient(circle at 50% 50%, #fff 0 12%, transparent 40%), conic-gradient(#35d0c0, #2f7be0 35%, #4a3fc0 55%, #e0407f 75%, #3c2a66 88%, #35d0c0); }
.clock { letter-spacing: .18px; }

/* window */
.window { height: 809px; flex: none; border-radius: 10px; overflow: hidden; background: #f5f5f5; display: flex; flex-direction: column; }
.titlebar { height: 29px; flex: none; background: #f1f0ee; border-bottom: 1px solid #d2d2d1; display: grid; grid-template-columns: 540px 20px 1fr; align-items: center; font: 700 12.8px Inter, sans-serif; letter-spacing: .03px; color: #484848; }
.titlebar b { padding-bottom: 1px; }
.lights { display: flex; gap: 8px; padding-left: 8px; }
.lights i { width: 12px; height: 12px; border-radius: 50%; }
.red { background: #fe453b; } .amber { background: #fdb901; } .green { background: #0fc82c; }
.tlogo { width: 16px; height: 16px; background: #fff; box-shadow: 1px 1px 0 #bbb; }
.toolbar { height: 39px; flex: none; padding: 0 0 2px 14px; display: grid; grid-template-columns: 33px 13px 32px 30px 26px 16px 31px 31px 26px 14px 26px 17px 12px 25px 15px 32px 25px 17px 12px 33px 32px 33px 13px 23px 14px 26px 16px 30px 37px 113px 12px 24px 16px 34px 13px 386px 39px 1fr; align-items: center; }
.sep { width: 1px; height: 35px; margin-top: 2px; background: #d0d0d0; }
.select { display: flex; align-items: center; justify-content: space-between; border: 1px solid #c6c6c6; border-radius: 1px; background: #fafafa; color: #333; }
.select em { height: 100%; border-left: 1px solid #ddd; display: flex; align-items: center; justify-content: center; width: 18px; }
.fit { width: 98px; height: 23px; padding-left: 7px; font-size: 12.5px; letter-spacing: -.08px; }
.showme { display: flex; align-items: center; gap: 6px; font-size: 12.5px; color: #111; letter-spacing: -.2px; }
.showme svg { width: 14px; height: 16px; }

.work { height: 690px; flex: none; display: flex; }
/* data pane */
.data { width: 210px; flex: none; background: #fff; border-right: 1px solid #d0d0d0; border-top: 1px solid #d0d0d0; display: flex; flex-direction: column; }
.dtabs { display: flex; height: 28px; line-height: 25px; flex: none; }
.dtabs b { width: 78px; padding-left: 18px; color: #111; }
.dtabs div { flex: 1; display: flex; justify-content: space-between; align-items: center; padding: 0 6px 2px 12px; background: #fafafa; border-left: 1px solid #d0d0d0; border-bottom: 1px solid #d0d0d0; letter-spacing: -.1px; }
.dtabs svg { width: 8px; height: 12px; }
.source { height: 30px; flex: none; border-bottom: 1px solid #e2e2e2; display: flex; align-items: center; padding: 0 0 2px 20px; gap: 4px; }
.source svg { width: 18px; height: 18px; }
.find { display: flex; align-items: center; padding: 10px 0 0 8px; }
.search { width: 132px; height: 23px; border: 1px solid #c4c4c4; border-radius: 1px; display: flex; align-items: center; justify-content: space-between; padding: 0 7px 0 8px; color: #8c8c8c; }
.search svg { width: 11px; height: 11px; }
.funnel { width: 14px; height: 14px; margin: 0 4px; }
.find i { width: 1px; height: 18px; background: #ccc; margin-right: 5px; }
.listicon { width: 12px; height: 10px; margin: 0 7px 1px 0; }
.tables { color: #000; padding: 8px 0 0 18px; line-height: 17px; height: 29px; flex: none; letter-spacing: -.1px; }
.tree { flex: 1; display: flex; min-height: 0; }
.fields { flex: 1; color: #111; overflow: hidden; }
.fields p { margin: 0; height: 21px; line-height: 21px; display: flex; align-items: center; padding-left: 36px; color: #111; white-space: nowrap; }
.fields p.head { padding-left: 6px; }
.head svg { width: 11px; height: 11px; margin-right: 6px; }
.fields .head svg + svg { width: 12px; height: 12px; margin: 0 12px 0 0; color: #555; }
.fields p i { width: 26px; font-size: 9.400px; font-weight: 600; color: #2d7797; padding-top: 1px; letter-spacing: .1px; }
.fields p svg { color: #2d7797; }
.fields p:not(.head) svg { width: 12px; height: 12px; margin: 0 12px 0 2px; }
.fields p.m svg { color: #3d9f7a; }
.fields .last { margin-bottom: 9px; }
.fields em { font-style: italic; letter-spacing: .12px; }
.fields b { color: #000; letter-spacing: -.08px; }
.fields .tight { letter-spacing: -.12px; }
.fields hr { margin: 1px 6px 0 30px; border: 0; height: 1px; background: #d6d6d6; }
.track { width: 15px; background: #fafafa; border-left: 1px solid #ececec; padding: 4px 0 0 3px; }
.track i { display: block; width: 8px; height: 262px; border-radius: 4px; background: #7d7d7d; }

/* cards */
.cards { width: 234px; flex: none; margin-left: 6px; display: flex; flex-direction: column; gap: 6px; }
.card { border: 1px solid #d0d0d0; background: #fafafa; }
h4 { margin: 0; font-weight: 400; font-size: 12.5px; padding: 7px 0 0 6px; line-height: 15px; letter-spacing: -.2px; }
.pages { height: 62px; } .filters { height: 101px; } .marks { height: 218px; }
.pill { height: 20px; border-radius: 10px; background: #4996b2; color: #eef7fa; line-height: 19.500px; padding: 0 11px 0 10px; display: flex; justify-content: space-between; align-items: center; white-space: nowrap; }
.pill svg { width: 12px; height: 12px; }
.filters .pill { margin: 0 4px 3px; }
.filters h4 { height: 32px; }
.marks h4 { height: 35px; }
.auto { height: 21px; margin: 0 6px; padding-left: 11px; font-size: 11px; letter-spacing: -.3px; }
.auto span { flex: 1; padding-left: 5px; }
.t { width: 14px; height: 12px; }
.auto .t { opacity: .6; width: 12.500px; }
.buttons { display: grid; grid-template-columns: 69px 70px 69px; gap: 6px; margin: 6px 6px 0; }
.buttons div { height: 42px; border: 1px solid #d0d0d0; display: flex; flex-direction: column; align-items: center; font-size: 11px; line-height: 14px; padding: 5px 1px 0 0; gap: 5px; letter-spacing: -.35px; }
.buttons svg { width: 16px; height: 16px; }
.sum { display: flex; align-items: center; padding: 9px 10px 0 13px; gap: 4px; }
.sum .pill { flex: 1; background: #00b180; letter-spacing: .12px; }

/* view */
.view { flex: 1; margin: 0 6px 0 6px; display: flex; flex-direction: column; gap: 6px; }
.shelf { height: 28px; flex: none; border: 1px solid #d0d0d0; background: #fafafa; display: flex; align-items: center; gap: 2px; }
.lab { width: 125px; height: 100%; border-right: 1px solid #d0d0d0; display: flex; align-items: center; padding: 0 0 2px 6px; gap: 7px; letter-spacing: -.1px; }
.lab svg { width: 12px; height: 12px; }
.shelf .pill { width: 148px; }
.stage { display: flex; gap: 6px; align-items: flex-start; }
.canvas { width: 691px; height: 616px; background: #fff; border: 1px solid #b5b5b5; padding: 6px; font-family: "Noto Sans", "Open Sans", sans-serif; }
h1 { margin: 0 0 5px; height: 39px; border: 1px solid #a8a793; background: #dfedea; text-align: center; font-weight: 500; font-size: 27px; line-height: 38px; color: #333; white-space: nowrap; letter-spacing: -.12px; }
.grid { margin: 0 2px 0 3px; display: grid; grid-template-columns: 100px 220px 156px 92px 1fr; height: 44px; border-bottom: 1px solid #ccc; font-size: 12.5px; letter-spacing: -.24px; color: #787878; }
.grid > * { padding-left: 6px; line-height: 44px; height: 43px; font-weight: 400; white-space: nowrap; }
.grid:not(.th) b { font-weight: 600; color: #333; }
.grid em { text-align: right; color: #444; padding: 0 4px 0 0; margin-right: 1px; font-size: 12.8px; line-height: 42px; }
.hl { background: #f4f4f4; }
.th { height: 21px; background: #f4eddb; color: #333; font-size: 16.500px; letter-spacing: -.5px; }
.grid.th b { line-height: 18px; height: 20px; font-weight: 500; }
.grid.th b:first-child { letter-spacing: -.72px; }
.peach { background: #f5e9d9; }
.filter { width: 281px; height: 58px; border: 1px solid #d0d0d0; background: #fafafa; }
.ftitle { display: block; height: 29px; padding: 7px 6px 0; line-height: 15px; }
.fbody { height: 27px; background: #f3edf4; padding: 3px; }
.fbody .select { height: 20px; background: #f8f4f8; font-size: 11px; padding-left: 3px; color: #222; letter-spacing: -.22px; }

/* sheet tabs */
.sheets { height: 31px; flex: none; border-top: 1px solid #cacaca; border-bottom: 1px solid #c4c4c4; display: grid; grid-template-columns: 131px 156px 124px 194px 168px 151px 85px 104px 120px 104px 7px 32px 32px 32px; background: linear-gradient(#e7e7e7, #e0e0e0); color: #555; letter-spacing: -.05px; }
.sheets div { border-right: 1px solid #c4c4c4; padding-left: 5px; display: flex; align-items: center; white-space: nowrap; }
.sheets div:nth-child(2) { padding-left: 6px; }
.sheets div:nth-child(7) { letter-spacing: -.25px; }
.sheets .ds { padding: 0 0 1px 9px; gap: 5px; }
.ds svg { width: 10px; height: 12px; }
.sheets .on { background: #fafafa; font-weight: 700; color: #444; letter-spacing: .14px; }
.sheets .d { padding-left: 7px; gap: 4px; }
.d svg { width: 12px; height: 12px; margin-bottom: 1px; }
.sheets .n { padding-left: 8px; }
.n svg { width: 16px; height: 16px; }
.status { flex: 1; display: grid; grid-template-columns: 1065px 127px 27px 27px 47px 71px 76px; background: linear-gradient(90deg, rgba(255,255,255,.6), transparent 8% 93%, rgba(255,255,255,.6)), linear-gradient(#dfdfdf, #d0d0d0); color: #111; font-size: 11px; letter-spacing: -.3px; }
.status > div { border-right: 1px solid #bcbcbc; display: flex; align-items: center; }
.status > .modes { border: 0; gap: 10px; padding-left: 8px; }
.stats { gap: 16px; padding-left: 12px; }
.stats span:nth-child(2) { letter-spacing: -.37px; }
.stats span:nth-child(3) { letter-spacing: -.14px; }
.steps { gap: 8px; padding-left: 7px; }
.steps svg { width: 8px; height: 8px; }
.modes svg { width: 11px; height: 11px; }

/* desktop and dock */
.desk { flex: 1; margin-top: -10px; padding: 11px 40px 5px; position: relative; z-index: -1; background: radial-gradient(ellipse 110px 48px at 1440px 14px, #14100e 30%, transparent 100%), linear-gradient(90deg, #50473f 0, #626863 12%, #68706d 20%, #b9686e 23%, #d99b9c 36%, #cfa09e 43%, #a5a09b 53%, #9e9a8e 66%, #878a80 80%, #7f8378 100%); font-family: Inter, sans-serif; }
.dock { height: 60px; border-radius: 15px; padding: 0 0 0 2px; display: flex; border: 1px solid rgba(255,255,255,.22); background: linear-gradient(90deg, #9c9381 0, #8f9486 10%, #989a90 18%, #c79993 22%, #e29c9d 28%, #eaa5a7 42%, #d9a8a2 52%, #b8b2a0 60%, #c4b69f 66%, #cbb7a6 70%, #aca38f 76%, #a5a28d 88%, #999a86 100%); }
.app { width: 48.550px; flex: none; position: relative; display: flex; justify-content: center; padding-top: 8px; }
.app svg { width: 37px; height: 37px; overflow: visible; filter: drop-shadow(0 1px 1px rgba(0,0,0,.25)); }
.app .sq { width: 39px; height: 39px; margin-top: -1px; background: #f8f8f8; }
.app .red { background: #e8160f; }
.app .big { width: 44px; height: 44px; margin-top: -3px; }
.run::after { content: ""; position: absolute; bottom: 1px; left: 22px; width: 4px; height: 4px; border-radius: 50%; background: #3a302b; }
.badge { position: absolute; top: 4px; right: 0; width: 17px; height: 17px; border-radius: 50%; background: #fb1a16; color: #fff; font-size: 10px; font-weight: 500; line-height: 17px; text-align: center; }
.dsep { width: 1px; flex: none; margin: 7px 10.500px; height: 44px; background: #7d7666; }
```
